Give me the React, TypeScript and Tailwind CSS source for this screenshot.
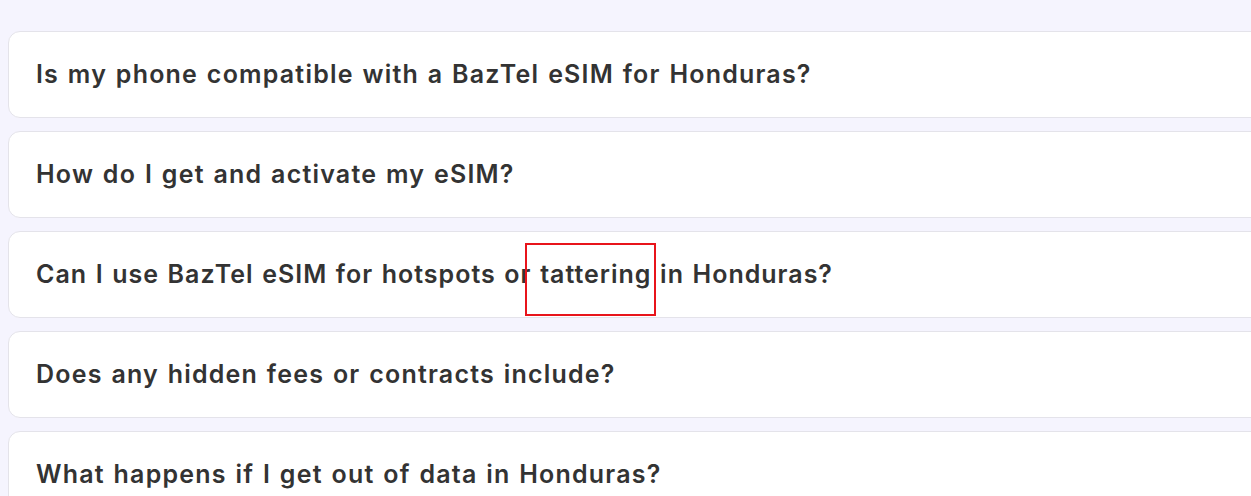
const faqs = [
  { q: "Is my phone compatible with a BazTel eSIM for Honduras?", tight: false },
  { q: "How do I get and activate my eSIM?", tight: false },
  { q: "Can I use BazTel eSIM for hotspots or tattering in Honduras?", tight: true },
  { q: "Does any hidden fees or contracts include?", tight: false },
  { q: "What happens if I get out of data in Honduras?", tight: false },
];

function Question({ text }: { text: string }) {
  // mark the word "tattering" the way the review screenshot does
  const parts = text.split("tattering");
  if (parts.length === 1) return <>{text}</>;
  return (
    <>
      {parts[0]}
      <span className="relative">
        tattering
        <span className="absolute left-[-15px] right-[-5px] top-[-16px] bottom-[-27px] border-2 border-[#e8141b] pointer-events-none" />
      </span>
      {parts[1]}
    </>
  );
}

export default function App() {
  return (
    <div className="w-[1251px] h-[496px] overflow-hidden bg-[#f5f4fe] pt-[31px] pl-[8px]">
      <div className="flex flex-col gap-[13px] w-[1300px]">
        {faqs.map((f) => (
          <div
            key={f.q}
            className="h-[87px] flex items-center bg-white border border-[#e4e3ea] rounded-[12px] pl-[27px]"
          >
            <h3
              className={`font-['Inter',sans-serif] font-semibold text-[25px] text-[#333333] [word-spacing:1.3px] ${
                f.tight ? "tracking-[1px]" : "tracking-[1.2px]"
              }`}
            >
              <Question text={f.q} />
            </h3>
          </div>
        ))}
      </div>
    </div>
  );
}
